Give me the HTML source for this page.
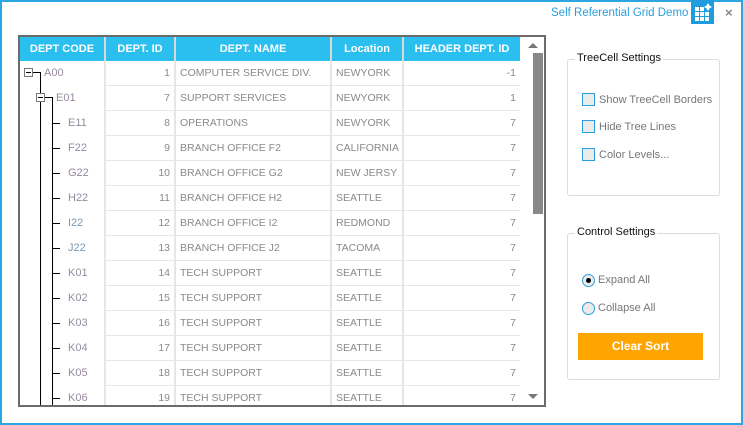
<!DOCTYPE html>
<html><head><meta charset="utf-8"><style>
*{margin:0;padding:0;box-sizing:border-box}
body{width:743px;height:425px;overflow:hidden;background:#fff;font-family:"Liberation Sans",sans-serif;position:relative}
.win{position:absolute;left:0;top:0;width:743px;height:425px;border:2px solid #2ba6e3}
.a{position:absolute}
.grid{left:18px;top:35px;width:528px;height:372px;border:2px solid #6b6b6b;overflow:hidden}
.hd{position:absolute;top:0;height:24px;background:#2bbff0;color:#fff;font-weight:bold;font-size:11px;line-height:24px;text-align:center;border-right:2px solid #d8d8d8}
.cell{position:absolute;height:25px;font-size:10.5px;color:#8a8a8a;line-height:24px;border-bottom:1px solid #e6e6e6;border-right:2px solid #e6e6e6;padding:0 4px;white-space:nowrap;overflow:hidden}
.tc{position:absolute;font-size:11px;color:#968aa0}
.vl{position:absolute;background:#000;width:1px}
.hl{position:absolute;background:#000;height:1px}
.box{position:absolute;width:9px;height:9px;border:1px solid #777;background:#fff}
.box:after{content:"";position:absolute;left:1px;top:3px;width:5px;height:1px;background:#000}
.grp{position:absolute;border:1px solid #d6dde4;border-radius:3px}
.gl{position:absolute;top:-8px;left:7px;background:#fff;padding:0 2px;font-size:11px;color:#111}
.cb{position:absolute;width:13px;height:13px;border:1px solid #2a9fe0;background:#ebebeb}
.lb{position:absolute;font-size:11px;color:#777}
.rb{position:absolute;width:13px;height:13px;border:1px solid #2a9fe0;border-radius:50%;background:#ebebeb}
</style></head><body>
<div class="win"></div>
<div class="a" style="left:551px;top:7px;font-size:11.5px;color:#2a9fe0">Self Referential Grid Demo</div>
<div class="a" style="left:691px;top:0;width:23px;height:24px;background:#1f9ce0">
<svg width="23" height="24"><g fill="#fff"><rect x="4" y="7" width="4" height="4"/><rect x="9" y="7" width="4" height="4"/><rect x="4" y="12" width="4" height="4"/><rect x="9" y="12" width="4" height="4"/><rect x="14" y="12" width="4" height="4"/><rect x="4" y="17" width="4" height="4"/><rect x="9" y="17" width="4" height="4"/><rect x="14" y="17" width="4" height="4"/><path d="M17 3l1.5 2.5 2.5 1.5-2.5 1.5-1.5 2.5-1.5-2.5-2.5-1.5 2.5-1.5z"/></g></svg></div>
<div class="a" style="left:725px;top:5px;font-size:13px;color:#888;font-weight:bold">×</div>

<div class="a grid">
<div class="hd" style="left:0;width:86px">DEPT CODE</div>
<div class="hd" style="left:86px;width:70px">DEPT. ID</div>
<div class="hd" style="left:156px;width:156px">DEPT. NAME</div>
<div class="hd" style="left:312px;width:72px">Location</div>
<div class="hd" style="left:384px;width:116px;border-right:none">HEADER DEPT. ID</div>
<div class="a" style="left:0;top:24px;width:86px;height:348px;border-right:2px solid #e6e6e6"></div>
<div id="rows"></div>
<div class="a" style="left:500px;top:0;width:26px;height:372px;background:#fff"></div>
<svg class="a" style="left:507px;top:5px" width="12" height="8"><path d="M1 6L6 1 11 6z" fill="#777"/></svg>
<div class="a" style="left:513px;top:16px;width:10px;height:161px;background:#888"></div>
<svg class="a" style="left:507px;top:356px" width="12" height="8"><path d="M1 1L11 1 6 6z" fill="#777"/></svg>
</div>
<script>
var d=[[1,"COMPUTER SERVICE DIV.","NEWYORK",-1,"A00"],[7,"SUPPORT SERVICES","NEWYORK",1,"E01"],[8,"OPERATIONS","NEWYORK",7,"E11"],[9,"BRANCH OFFICE F2","CALIFORNIA",7,"F22"],[10,"BRANCH OFFICE G2","NEW JERSY",7,"G22"],[11,"BRANCH OFFICE H2","SEATTLE",7,"H22"],[12,"BRANCH OFFICE I2","REDMOND",7,"I22"],[13,"BRANCH OFFICE J2","TACOMA",7,"J22"],[14,"TECH SUPPORT","SEATTLE",7,"K01"],[15,"TECH SUPPORT","SEATTLE",7,"K02"],[16,"TECH SUPPORT","SEATTLE",7,"K03"],[17,"TECH SUPPORT","SEATTLE",7,"K04"],[18,"TECH SUPPORT","SEATTLE",7,"K05"],[19,"TECH SUPPORT","SEATTLE",7,"K06"]];
var h="";
d.forEach(function(r,i){var t=24+i*25;
h+='<div class="cell" style="left:86px;top:'+t+'px;width:70px;text-align:right">'+r[0]+'</div>';
h+='<div class="cell" style="left:156px;top:'+t+'px;width:156px">'+r[1]+'</div>';
h+='<div class="cell" style="left:312px;top:'+t+'px;width:72px">'+r[2]+'</div>';
h+='<div class="cell" style="left:384px;top:'+t+'px;width:116px;text-align:right;border-right:none">'+r[3]+'</div>';
var cy=t+12, tx=i==0?24:(i==1?36:48);
var col=(r[4]=="I22"||r[4]=="J22")?"#7c98b0":"#968aa0";
h+='<div class="tc" style="left:'+tx+'px;top:'+(t+6)+'px;color:'+col+'">'+r[4]+'</div>';
if(i>=2){h+='<div class="hl" style="left:32px;top:'+cy+'px;width:8px"></div>';}
});
h+='<div class="box" style="left:4px;top:31px"></div><div class="hl" style="left:13px;top:35px;width:8px"></div><div class="vl" style="left:20px;top:35px;height:340px"></div>';
h+='<div class="box" style="left:16px;top:56px"></div><div class="hl" style="left:25px;top:60px;width:8px"></div><div class="vl" style="left:32px;top:60px;height:320px"></div>';
document.getElementById("rows").innerHTML=h;
</script>

<div class="grp" style="left:567px;top:59px;width:153px;height:137px"><div class="gl">TreeCell Settings</div></div>
<div class="cb" style="left:582px;top:93px"></div><div class="lb" style="left:599px;top:94px">Show TreeCell Borders</div>
<div class="cb" style="left:582px;top:120px"></div><div class="lb" style="left:599px;top:121px">Hide Tree Lines</div>
<div class="cb" style="left:582px;top:148px"></div><div class="lb" style="left:599px;top:149px">Color Levels...</div>

<div class="grp" style="left:567px;top:233px;width:153px;height:147px"><div class="gl">Control Settings</div></div>
<div class="rb" style="left:582px;top:274px"><div style="position:absolute;left:3px;top:3px;width:5px;height:5px;border-radius:50%;background:#000"></div></div>
<div class="lb" style="left:598px;top:274px">Expand All</div>
<div class="rb" style="left:582px;top:302px"></div><div class="lb" style="left:598px;top:302px">Collapse All</div>
<div class="a" style="left:578px;top:333px;width:125px;height:27px;background:#ffa500;color:#fff;font-weight:bold;font-size:12px;text-align:center;line-height:27px">Clear Sort</div>
</body></html>
